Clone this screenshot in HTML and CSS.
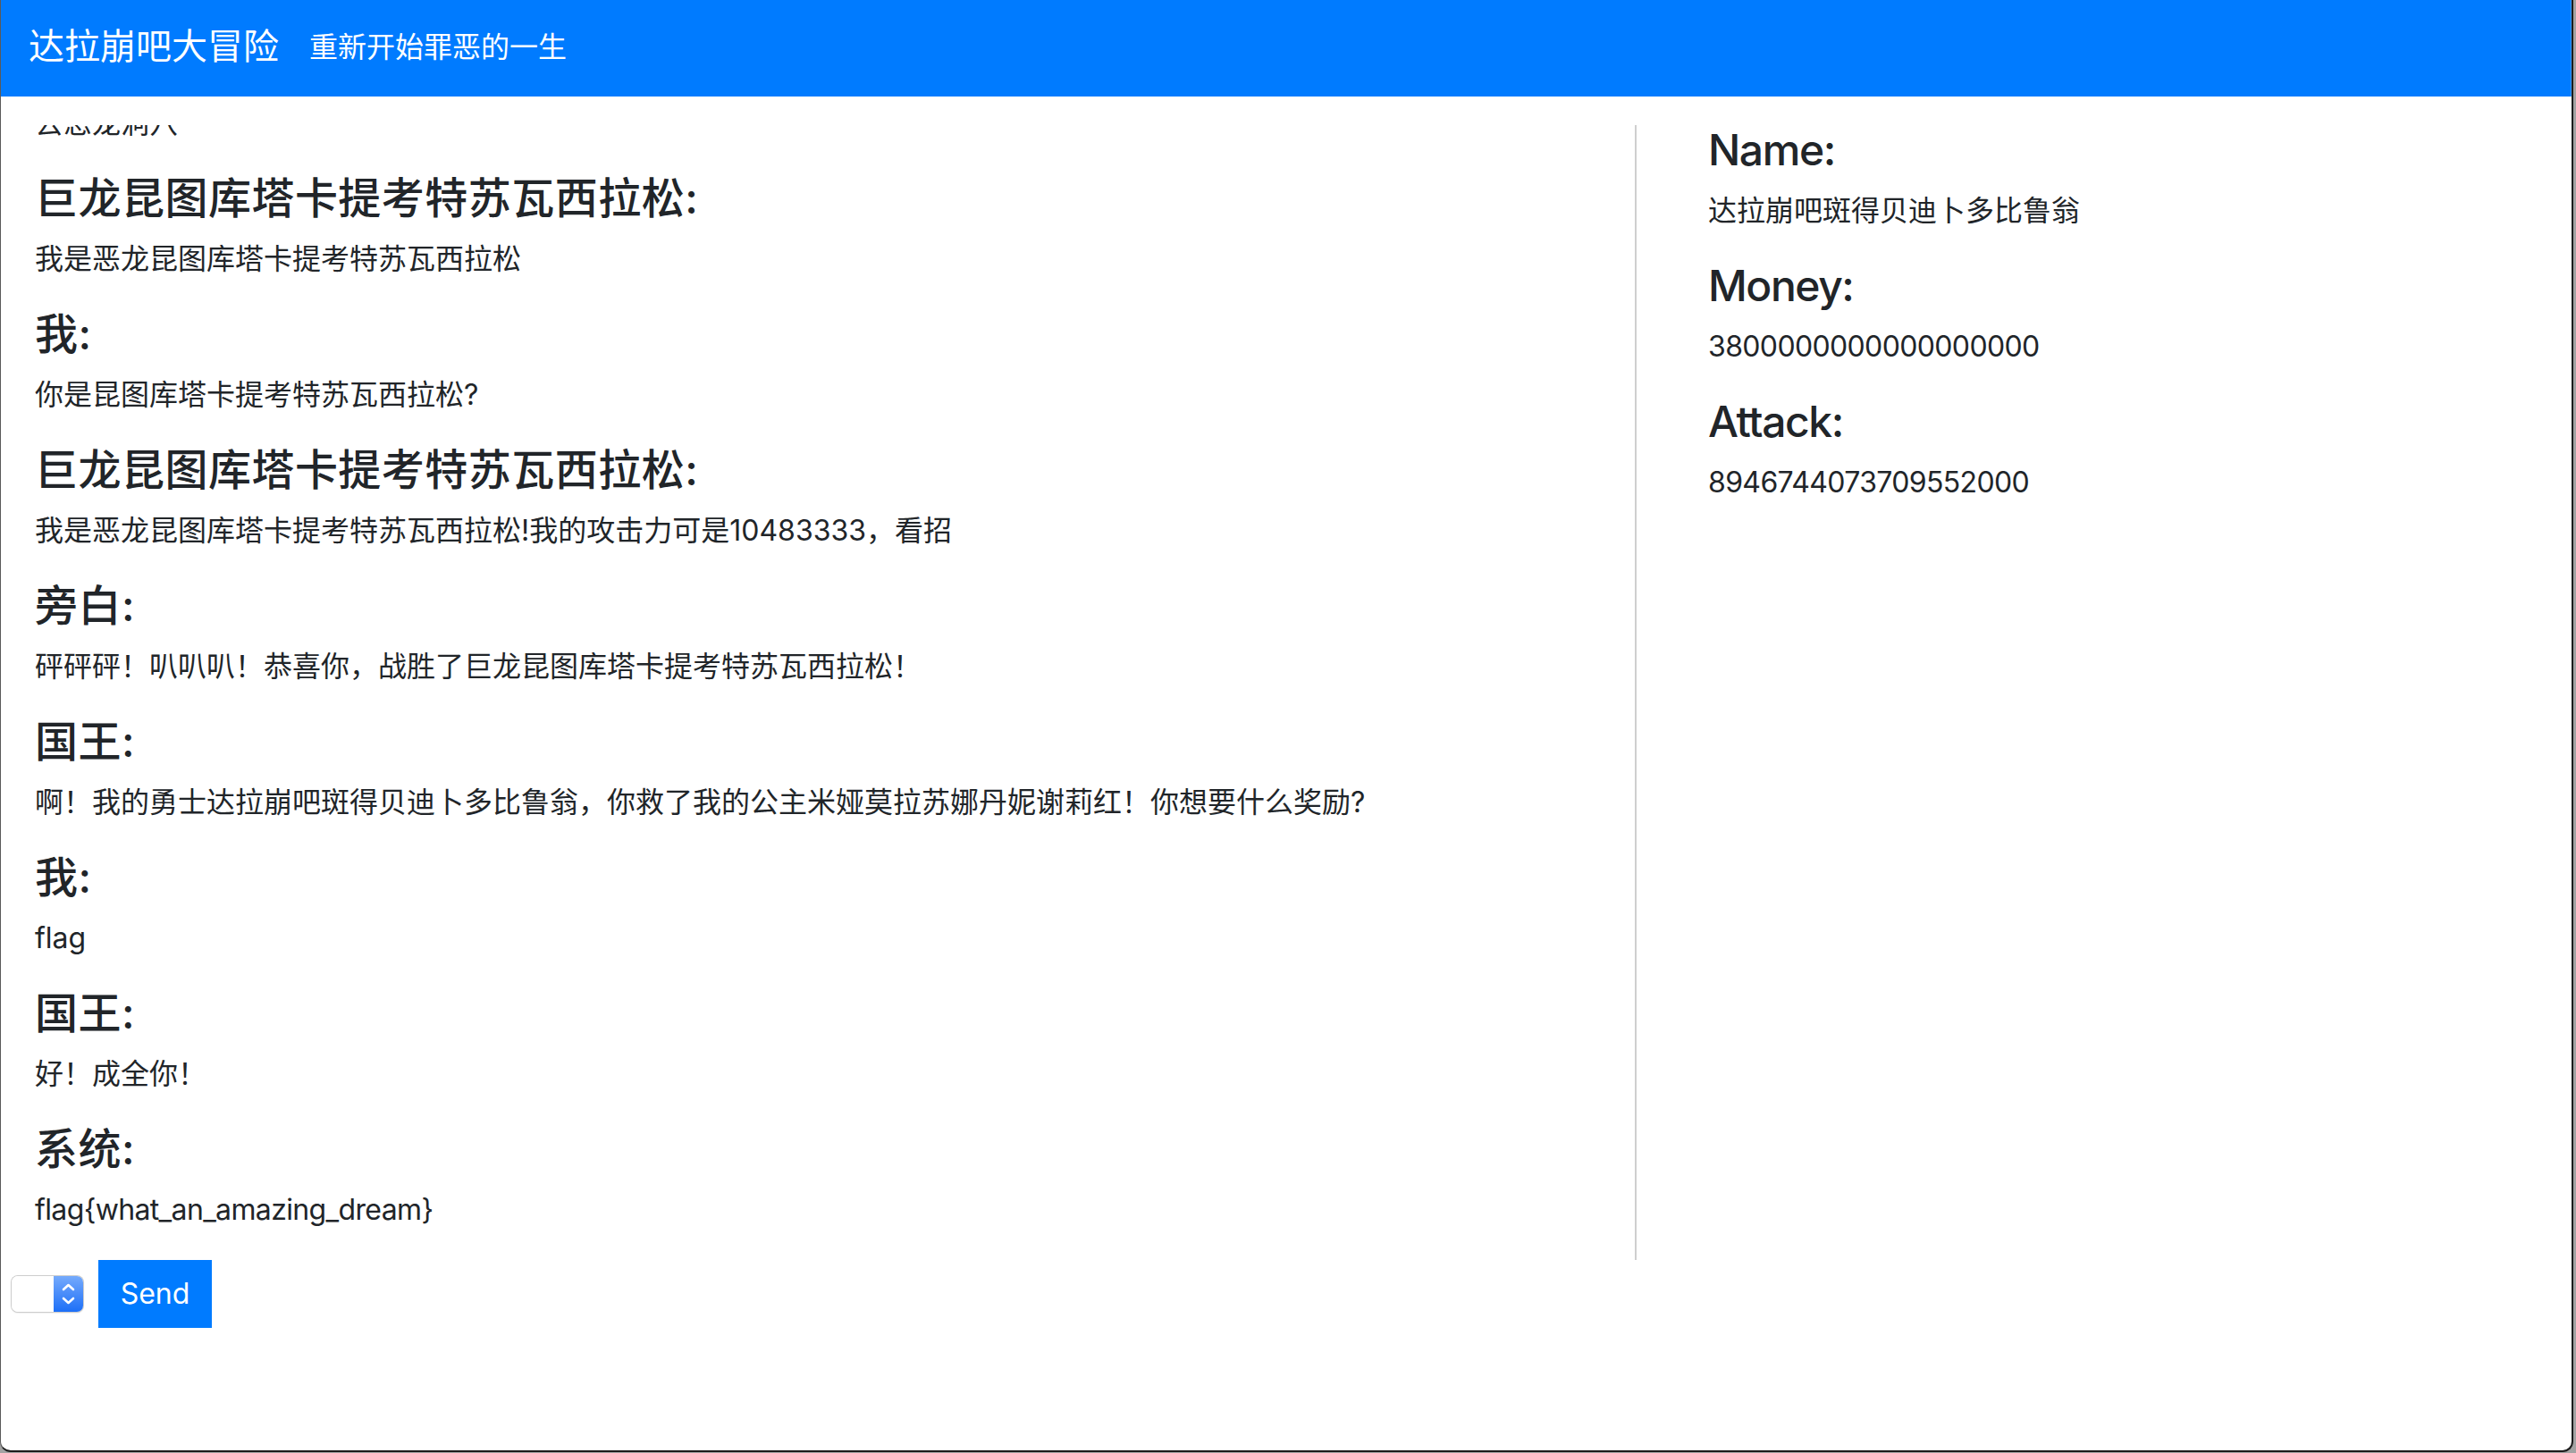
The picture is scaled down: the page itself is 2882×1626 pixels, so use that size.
FILE: index.html
```html
<!DOCTYPE html>
<html lang="zh-CN">
<head>
<meta charset="utf-8">
<title>达拉崩吧大冒险</title>
<link rel="stylesheet" href="styles.css">
</head>
<body>
<div class="window">
  <nav class="navbar">
    <a class="brand" href="#">达拉崩吧大冒险</a>
    <a class="nav-link" href="#">重新开始罪恶的一生</a>
  </nav>
  <div class="main">
    <div class="chat">
      <div class="log">
        <p>去恶龙洞穴</p>
        <h4>巨龙昆图库塔卡提考特苏瓦西拉松:</h4>
        <p>我是恶龙昆图库塔卡提考特苏瓦西拉松</p>
        <h4>我:</h4>
        <p>你是昆图库塔卡提考特苏瓦西拉松?</p>
        <h4>巨龙昆图库塔卡提考特苏瓦西拉松:</h4>
        <p>我是恶龙昆图库塔卡提考特苏瓦西拉松!我的攻击力可是10483333，看招</p>
        <h4>旁白:</h4>
        <p>砰砰砰！叭叭叭！恭喜你，战胜了巨龙昆图库塔卡提考特苏瓦西拉松！</p>
        <h4>国王:</h4>
        <p>啊！我的勇士达拉崩吧斑得贝迪卜多比鲁翁，你救了我的公主米娅莫拉苏娜丹妮谢莉红！你想要什么奖励?</p>
        <h4>我:</h4>
        <p>flag</p>
        <h4>国王:</h4>
        <p>好！成全你！</p>
        <h4>系统:</h4>
        <p class="latin">flag{what_an_amazing_dream}</p>
      </div>
    </div>
    <div class="info">
      <h4 class="latin-head">Name:</h4>
      <p>达拉崩吧斑得贝迪卜多比鲁翁</p>
      <h4 class="latin-head">Money:</h4>
      <p class="latin">3800000000000000000</p>
      <h4 class="latin-head">Attack:</h4>
      <p class="latin">8946744073709552000</p>
    </div>
  </div>
  <form class="controls">
    <span class="stepper">
      <select class="choice"><option></option></select>
      <span class="arrows">
        <svg width="33" height="40" viewBox="0 0 33 40">
          <polyline points="11,15 16.5,10 22,15" fill="none" stroke="#fff" stroke-width="2.6" stroke-linecap="round" stroke-linejoin="round"/>
          <polyline points="11,25 16.5,30 22,25" fill="none" stroke="#fff" stroke-width="2.6" stroke-linecap="round" stroke-linejoin="round"/>
        </svg>
      </span>
    </span>
    <button class="send" type="button">Send</button>
  </form>
</div>
</body>
</html>
```

FILE: styles.css
```css
html, body {
  margin: 0;
  padding: 0;
}
body {
  width: 2882px;
  height: 1626px;
  overflow: hidden;
  background: #a3a3a3;
  font-family: Inter, "Noto Sans CJK SC", sans-serif;
  color: #212529;
}
.window {
  box-sizing: border-box;
  width: 2879px;
  height: 1625px;
  background: #fff;
  border-right: 2px solid #1c1c1c;
  border-bottom: 2px solid #1c1c1c;
  border-left: 1px solid #5a5a5a;
  border-radius: 0 0 12px 12px;
  overflow: hidden;
}
.navbar {
  height: 108px;
  background: #007bff;
  display: flex;
  align-items: center;
  padding-left: 31px;
  box-shadow: inset -1px 0 0 #3d97ff;
}
.brand {
  color: #fff;
  text-decoration: none;
  font-size: 40px;
  line-height: 60px;
  margin-right: 34px;
  margin-top: -4px;
}
.nav-link {
  color: #fff;
  text-decoration: none;
  font-size: 32px;
  line-height: 48px;
  margin-top: -2px;
}
.main {
  display: flex;
  margin-top: 32px;
  height: 1270px;
}
.chat {
  flex: 0 0 1828px;
  box-sizing: border-box;
  padding-left: 38px;
  display: flex;
  flex-direction: column;
  justify-content: flex-end;
  overflow: hidden;
}
.log {
  flex-shrink: 0;
}
h4 {
  margin: 0 0 16px 0;
  font-size: 48px;
  line-height: 56px;
  font-weight: 500;
  letter-spacing: 0.01em;
}
.latin-head {
  letter-spacing: -0.03em;
}
p {
  margin: 0 0 32px 0;
  font-size: 32px;
  line-height: 48px;
  font-weight: 400;
}
.latin {
  letter-spacing: -0.02em;
}
.info {
  border-left: 2px solid #cfcfcf;
  padding-left: 80px;
}
.controls {
  display: flex;
  align-items: center;
  padding-left: 12px;
  gap: 17px;
  margin: 0;
}
.stepper {
  display: flex;
  width: 80px;
  height: 40px;
  box-sizing: border-box;
  border-radius: 7px;
  box-shadow: 0 0 0 1px #cdcdcd, 0 1px 2px rgba(0,0,0,0.18);
  overflow: hidden;
}
.choice {
  appearance: none;
  -webkit-appearance: none;
  width: 47px;
  height: 40px;
  border: 0;
  margin: 0;
  padding: 0;
  background: #fff;
  outline: none;
}
.arrows {
  display: block;
  width: 33px;
  height: 40px;
  background: linear-gradient(#75aafc, #1d6ff7);
}
.arrows svg {
  display: block;
}
.send {
  width: 127px;
  height: 76px;
  border: 0;
  margin: 0;
  padding: 0;
  border-radius: 0;
  background: #007bff;
  color: #fff;
  font-family: Inter, "Noto Sans CJK SC", sans-serif;
  font-size: 32px;
  line-height: 48px;
  cursor: pointer;
}
```
